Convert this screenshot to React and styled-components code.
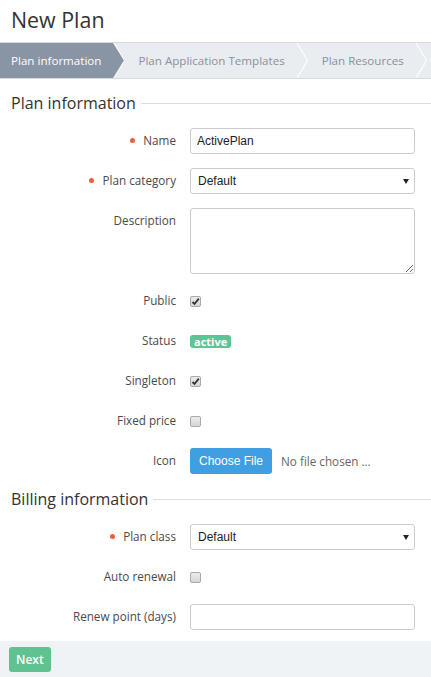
import React from "react";
import styled, { createGlobalStyle } from "styled-components";

const Global = createGlobalStyle`
  html, body { margin: 0; padding: 0; background: #fff; }
  body { font-family: "Open Sans", "Liberation Sans", sans-serif; color: #444; }
  * { box-sizing: border-box; }
`;

const Page = styled.div`
  width: 431px;
  min-height: 677px;
  display: flex;
  flex-direction: column;
`;

const Title = styled.h1`
  margin: 0 0 2px;
  padding: 0 11px;
  font-size: 21.4px;
  font-weight: 400;
  line-height: 40px;
  color: #333;
`;

const Steps = styled.nav`
  display: flex;
  align-items: stretch;
  height: 37px;
  background: #e9edf1;
  border-top: 1px solid #d6dadf;
  border-bottom: 1px solid #d6dadf;
  overflow: hidden;
`;

const Step = styled.div`
  display: flex;
  align-items: stretch;
  flex: none;
`;

const StepLabel = styled.span`
  display: flex;
  align-items: center;
  padding: 0 11px 0 ${(p) => (p.$first ? 11 : 14)}px;
  font-size: 11.6px;
  white-space: nowrap;
  color: ${(p) => (p.$active ? "#fff" : "#8b9099")};
  background: ${(p) => (p.$active ? "#8994a5" : "transparent")};
`;

const Chevron = ({ active }) => (
  <svg width="12" height="35" viewBox="0 0 12 35" style={{ display: "block", flex: "none" }}>
    {active ? (
      <>
        <polygon points="0,0 1,0 12,17.5 1,35 0,35" fill="#8994a5" />
        <polyline points="1.5,-1 12.5,17.5 1.5,36" fill="none" stroke="#f7f9fb" strokeWidth="1" />
      </>
    ) : (
      <polyline points="0.5,-1 11.5,17.5 0.5,36" fill="none" stroke="#fbfcfd" strokeWidth="1.3" />
    )}
  </svg>
);

const Section = styled.section`
  padding: 0 16px 0 11px;
`;

const Legend = styled.div`
  display: flex;
  align-items: center;
  height: 22px;
  margin: ${(p) => (p.$top ? "13px" : "0")} -16px 14px 0;
  font-size: 16px;
  line-height: 22px;
  color: #333;
  &::after {
    content: "";
    flex: 1;
    height: 1px;
    margin-left: 5px;
    background: #dadde1;
  }
`;

const Row = styled.div`
  display: grid;
  grid-template-columns: 165px 1fr;
  column-gap: 14px;
  min-height: 26px;
  margin-bottom: 14px;
`;

const Label = styled.label`
  display: flex;
  justify-content: flex-end;
  align-items: flex-start;
  padding-top: 4px;
  font-size: 11.7px;
  line-height: 17px;
  color: #4a4a4a;
  white-space: nowrap;
`;

const Dot = styled.span`
  width: 5px;
  height: 5px;
  border-radius: 50%;
  background: #ef5f3a;
  margin: 6px 8px 0 0;
  flex: none;
`;

const Control = styled.div`
  display: flex;
  align-items: ${(p) => (p.$top ? "flex-start" : "center")};
  min-width: 0;
`;

const TextInput = styled.input`
  width: 100%;
  height: 26px;
  border: 1px solid #c9cdd3;
  border-radius: 3px;
  padding: 0 6px;
  font-family: "Liberation Sans", Arial, sans-serif;
  font-size: 12px;
  color: #222;
  background: #fff;
  outline: none;
`;

const SelectWrap = styled.div`
  position: relative;
  width: 100%;
  &::after {
    content: "";
    position: absolute;
    right: 6px;
    top: 11px;
    border-left: 3.5px solid transparent;
    border-right: 3.5px solid transparent;
    border-top: 5px solid #222;
    pointer-events: none;
  }
`;

const Select = styled.select`
  appearance: none;
  width: 100%;
  height: 26px;
  border: 1px solid #c9cdd3;
  border-radius: 3px;
  padding: 0 7px;
  font-family: "Liberation Sans", Arial, sans-serif;
  font-size: 12px;
  color: #222;
  background: #fff;
  outline: none;
`;

const TextArea = styled.textarea`
  display: block;
  width: 100%;
  height: 66px;
  border: 1px solid #c9cdd3;
  border-radius: 3px;
  padding: 4px 6px;
  font-family: "Liberation Sans", Arial, sans-serif;
  font-size: 12px;
  outline: none;
  resize: vertical;
`;

const Box = styled.span`
  display: inline-flex;
  align-items: center;
  justify-content: center;
  width: 11px;
  height: 11px;
  border: 1px solid #a9a9a9;
  border-radius: 2px;
  background: linear-gradient(#ececec, #d6d6d6);
`;

const Checkbox = ({ checked }) => (
  <Box role="checkbox" aria-checked={checked}>
    {checked && (
      <svg width="9" height="9" viewBox="0 0 9 9">
        <path d="M1.5 5 L3.5 7 L7.8 1.6" fill="none" stroke="#333" strokeWidth="1.8" />
      </svg>
    )}
  </Box>
);

const Badge = styled.span`
  display: inline-block;
  height: 13px;
  padding: 0 4px;
  border-radius: 3px;
  background: #5cc596;
  color: #fff;
  font-size: 11px;
  font-weight: 700;
  line-height: 13px;
`;

const FileButton = styled.button`
  height: 26px;
  padding: 0 9px;
  border: none;
  border-radius: 3px;
  background: #3f9fe0;
  color: #fff;
  font-family: "Liberation Sans", Arial, sans-serif;
  font-size: 12px;
  cursor: pointer;
`;

const FileName = styled.span`
  margin-left: 9px;
  font-size: 11.7px;
  color: #666;
`;

const Footer = styled.footer`
  margin-top: -3px;
  padding: 6px 9px 5px;
  background: #f0f3f6;
  height: 36px;
`;

const NextButton = styled.button`
  height: 25px;
  padding: 0 7px;
  border: none;
  border-radius: 3px;
  background: #5fc290;
  color: #fff;
  font-family: "Open Sans", sans-serif;
  font-size: 12px;
  font-weight: 600;
`;

export default function App() {
  return (
    <Page>
      <Global />
      <Title>New Plan</Title>
      <Steps>
        <Step>
          <StepLabel $first $active>Plan information</StepLabel>
          <Chevron active />
        </Step>
        <Step>
          <StepLabel>Plan Application Templates</StepLabel>
          <Chevron />
        </Step>
        <Step>
          <StepLabel>Plan Resources</StepLabel>
          <Chevron />
        </Step>
      </Steps>

      <Section>
        <Legend $top>Plan information</Legend>
        <Row>
          <Label><Dot />Name</Label>
          <Control><TextInput defaultValue="ActivePlan" /></Control>
        </Row>
        <Row>
          <Label><Dot />Plan category</Label>
          <Control>
            <SelectWrap>
              <Select defaultValue="Default"><option>Default</option></Select>
            </SelectWrap>
          </Control>
        </Row>
        <Row>
          <Label>Description</Label>
          <Control $top><TextArea /></Control>
        </Row>
        <Row>
          <Label>Public</Label>
          <Control><Checkbox checked /></Control>
        </Row>
        <Row>
          <Label>Status</Label>
          <Control><Badge>active</Badge></Control>
        </Row>
        <Row>
          <Label>Singleton</Label>
          <Control><Checkbox checked /></Control>
        </Row>
        <Row>
          <Label>Fixed price</Label>
          <Control><Checkbox /></Control>
        </Row>
        <Row>
          <Label>Icon</Label>
          <Control>
            <FileButton>Choose File</FileButton>
            <FileName>No file chosen ...</FileName>
          </Control>
        </Row>

        <Legend>Billing information</Legend>
        <Row>
          <Label><Dot />Plan class</Label>
          <Control>
            <SelectWrap>
              <Select defaultValue="Default"><option>Default</option></Select>
            </SelectWrap>
          </Control>
        </Row>
        <Row>
          <Label>Auto renewal</Label>
          <Control><Checkbox /></Control>
        </Row>
        <Row>
          <Label>Renew point (days)</Label>
          <Control><TextInput /></Control>
        </Row>
      </Section>

      <Footer>
        <NextButton>Next</NextButton>
      </Footer>
    </Page>
  );
}
